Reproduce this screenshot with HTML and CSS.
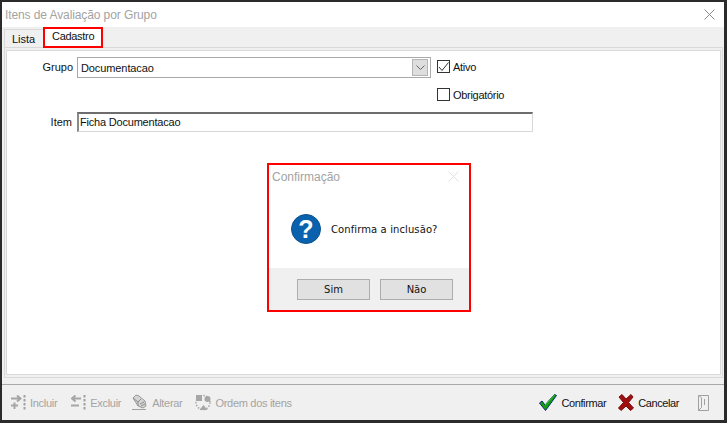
FILE: index.html
```html
<!DOCTYPE html>
<html lang="pt-BR">
<head>
  <meta charset="UTF-8" />
  <title>Itens de Avaliação por Grupo</title>
  <link rel="stylesheet" href="styles.css">
</head>
<body>
  <div class="window">
    <!-- Title Bar -->
    <header class="titlebar">
      <span class="title">Itens de Avaliação por Grupo</span>
      <svg width="11" height="11" viewBox="0 0 11 11"><path d="M0.5 0.5L10.5 10.5M10.5 0.5L0.5 10.5" stroke="#8a8a8a" fill="none"/></svg>
    </header>

    <!-- Tabs -->
    <nav class="tabs">
      <div class="tab">Lista</div>
      <div class="tab-active">Cadastro</div>
    </nav>

    <!-- Form -->
    <div class="tab-frame">
      <main class="page">
        <div class="row row-grupo">
          <label class="field-label">Grupo</label>
          <div class="combo">
            <span>Documentacao</span>
            <span class="combo-btn">
              <svg width="9" height="5" viewBox="0 0 9 5"><path d="M0.5 0.5L4.5 4.5L8.5 0.5" stroke="#666" fill="none"/></svg>
            </span>
          </div>
          <label class="check">
            <span class="box">
              <svg width="11" height="10" viewBox="0 0 11 10"><path d="M1 5L4 8.5L10.5 0.5" stroke="#333" fill="none"/></svg>
            </span>
            Ativo
          </label>
        </div>
        <div class="row row-obrig">
          <label class="check">
            <span class="box"></span>
            Obrigatório
          </label>
        </div>
        <div class="row">
          <label class="field-label field-label-item">Item</label>
          <div class="input">Ficha Documentacao</div>
        </div>
      </main>
    </div>

    <!-- Toolbar -->
    <footer class="toolbar">
      <div class="tool tool-incluir">
        <svg width="15" height="15" viewBox="0 0 15 15"><path d="M0 3.5H8M6 0.5L9.5 3.5L6 6.5M0 10.5H7M3.5 7.5V14" stroke="#a6a6a6" stroke-width="2" fill="none"/><path d="M13.5 0v2.5M13.5 4v2.5M13.5 8v2.5M13.5 12v2.5" stroke="#a0a0a0" stroke-width="2"/></svg>
        <span>Incluir</span>
      </div>
      <div class="tool tool-excluir">
        <svg width="15" height="15" viewBox="0 0 15 15"><path d="M10 3.5H2M4.5 0.5L1 3.5L4.5 6.5M0 10.5H8" stroke="#a6a6a6" stroke-width="2" fill="none"/><path d="M13.5 0v2.5M13.5 4v2.5M13.5 8v2.5M13.5 12v2.5" stroke="#a0a0a0" stroke-width="2"/></svg>
        <span>Excluir</span>
      </div>
      <div class="tool tool-alterar">
        <svg width="16" height="17" viewBox="0 0 16 17"><path d="M0 15.5H14" stroke="#a0a0a0"/><path d="M1 4L4 1L7 2L13 7L14 12L11 14L6 12Z" fill="#d4d4d4" stroke="#9a9a9a"/><path d="M1 4L6 8L6 12M6 8L9 5M8 10L12 8M9 12L13 10" stroke="#8c8c8c" fill="none"/></svg>
        <span>Alterar</span>
      </div>
      <div class="tool tool-ordem">
        <svg width="16" height="17" viewBox="0 0 16 17"><circle cx="8" cy="8.5" r="7" fill="none" stroke="#a8a8a8" stroke-width="1.5" stroke-dasharray="1.5 1.5"/><rect x="1" y="1" width="6" height="6" fill="#a6a6a6"/><circle cx="12.5" cy="5" r="3" fill="#a6a6a6"/><path d="M4.5 16L8.5 11L12.5 16Z" fill="#a6a6a6"/></svg>
        <span>Ordem dos itens</span>
      </div>
      <div class="tool tool-confirmar">
        <svg width="18" height="17" viewBox="0 0 18 17"><path d="M0.5 9L3 7L6 11L15.5 0.5L17.5 1.5L6.5 16.5Z" fill="#12a012" stroke="#0b2a70"/><path d="M6 11L15.5 1" stroke="#3fce3f"/></svg>
        <span>Confirmar</span>
      </div>
      <div class="tool tool-cancelar">
        <svg width="16" height="17" viewBox="0 0 16 17"><path d="M1 3L4 0.5L8 5L13 0.5L15 3L10.5 8.5L15.5 14L12.5 16.5L8 12L3 16.5L0.5 14L5.5 8.5Z" fill="#a00f0f" stroke="#7a0a0a"/></svg>
        <span>Cancelar</span>
      </div>
      <svg class="door" width="11" height="16" viewBox="0 0 11 16"><path d="M0.5 0.5H10.5V15.5H0.5ZM0.5 15.5L3.5 12.5V3L1 0.5M6.5 4V10" fill="none" stroke="#a0a0a0"/></svg>
    </footer>

    <!-- Confirmation Dialog -->
    <section class="dialog">
      <div class="dialog-head">
        <span>Confirmação</span>
        <svg width="11" height="11" viewBox="0 0 11 11"><path d="M0.5 0.5L10.5 10.5M10.5 0.5L0.5 10.5" stroke="#e2e2e2" fill="none"/></svg>
      </div>
      <div class="dialog-body">
        <span class="help-icon">?</span>
        <span class="dialog-msg">Confirma a inclusão?</span>
      </div>
      <div class="dialog-foot">
        <button class="btn">Sim</button>
        <button class="btn">Não</button>
      </div>
    </section>
  </div>
</body>
</html>
```

FILE: styles.css
```css
/* Base */
* {
  margin: 0;
  padding: 0;
  box-sizing: border-box;
}
body {
  font-family: "Liberation Sans", Arial, sans-serif;
  font-size: 11px;
  color: #111;
  background: #fff;
}

/* Window */
.window {
  position: relative;
  width: 727px;
  height: 423px;
  display: flex;
  flex-direction: column;
  border: solid #2b2b2b;
  border-width: 2px 3px 3px 2px;
  background: #f0f0f0;
}

/* Title Bar */
.titlebar {
  height: 25px;
  flex: none;
  background: #fff;
  display: flex;
  align-items: center;
  justify-content: space-between;
  padding: 0 9px 0 3px;
}
.title {
  font-size: 12px;
  letter-spacing: -0.1px;
  color: #a3a3a3;
}

/* Tabs */
.tabs {
  height: 20px;
  flex: none;
  display: flex;
  align-items: flex-end;
  padding-left: 2px;
}
.tab {
  width: 39px;
  height: 18px;
  padding: 2px 0 0 7px;
  line-height: 14px;
  border: 1px solid #d9d9d9;
  border-width: 1px 0 0 1px;
}
.tab-active {
  width: 60px;
  height: 21px;
  padding-left: 7px;
  line-height: 14px;
  letter-spacing: -0.3px;
  background: #fff;
  border: 2px solid #f00;
  position: relative;
  top: 1px;
}

/* Form Page */
.tab-frame {
  height: 331px;
  flex: none;
  margin: 0 1px 0 2px;
  padding: 2px 1px;
  border: 1px solid #d9d9d9;
}
.page {
  height: 100%;
  background: #fff;
  border: 1px solid #d9d9d9;
}
.row {
  display: flex;
  align-items: flex-start;
}
.row-grupo {
  padding-top: 6px;
  height: 37px;
}
.row-obrig {
  padding-left: 430px;
  height: 24px;
}
.field-label {
  width: 66px;
  text-align: right;
  line-height: 20px;
  margin-right: 4px;
}
.field-label-item {
  width: 65px;
  margin-right: 5px;
}
.combo {
  width: 354px;
  height: 21px;
  border: 1px solid #a9a9a9;
  display: flex;
  align-items: center;
  justify-content: space-between;
  padding: 0 2px 0 3px;
  letter-spacing: -0.1px;
}
.combo-btn {
  width: 16px;
  height: 17px;
  background: #dedede;
  border: 1px solid #b5b5b5;
  display: flex;
  align-items: center;
  justify-content: center;
}
.check {
  display: flex;
  align-items: center;
  gap: 3px;
  height: 13px;
  letter-spacing: -0.3px;
}
.row-grupo .check {
  margin-left: 6px;
  margin-top: 3px;
}
.box {
  width: 13px;
  height: 13px;
  border: 1px solid #333;
  background: #fff;
  display: flex;
  align-items: center;
  justify-content: center;
}
.input {
  width: 456px;
  height: 20px;
  border: 1px solid #d8d8d8;
  border-top: 2px solid #6d6d6d;
  border-left: 2px solid #8a8a8a;
  line-height: 17px;
  padding-left: 1px;
  letter-spacing: -0.2px;
}

/* Toolbar */
.toolbar {
  height: 36px;
  flex: none;
  margin-top: 6px;
  border-top: 1px solid #a9a9a9;
  display: flex;
  align-items: center;
  padding: 0 15px 0 9px;
  letter-spacing: -0.3px;
}
.tool {
  display: flex;
  align-items: center;
  gap: 4px;
  color: #a3a3a3;
}
.tool-excluir {
  margin-left: 14px;
}
.tool-alterar {
  margin-left: 11px;
}
.tool-ordem {
  margin-left: 13px;
}
.tool-confirmar {
  margin-left: auto;
  letter-spacing: -0.4px;
  color: #111;
}
.tool-cancelar {
  margin-left: 12px;
  letter-spacing: -0.4px;
  color: #111;
}
.door {
  margin-left: 19px;
}

/* Dialog */
.dialog {
  position: absolute;
  left: 265px;
  top: 161px;
  width: 204px;
  height: 149px;
  border: 2px solid #f00;
  background: #fff;
  display: flex;
  flex-direction: column;
}
.dialog-head {
  height: 22px;
  flex: none;
  display: flex;
  align-items: center;
  justify-content: space-between;
  padding: 1px 10px 0 3px;
  font-size: 12px;
  color: #a3a3a3;
}
.dialog-body {
  flex: 1;
  display: flex;
  align-items: center;
  gap: 10px;
  padding: 3px 0 0 22px;
}
.dialog-msg {
  font-family: "DejaVu Sans", sans-serif;
  font-size: 10px;
  letter-spacing: 0.1px;
}
.help-icon {
  width: 30px;
  height: 30px;
  border-radius: 50%;
  background: #0a62ae;
  border: 1px solid #0c4f8c;
  color: #fff;
  font-size: 25px;
  font-weight: bold;
  line-height: 28px;
  text-align: center;
}
.dialog-foot {
  height: 42px;
  flex: none;
  background: #f0f0f0;
  display: flex;
  gap: 10px;
  padding: 11px 0 0 28px;
}
.btn {
  width: 73px;
  height: 21px;
  background: #e1e1e1;
  border: 1px solid #adadad;
  font-family: "DejaVu Sans", sans-serif;
  font-size: 10px;
  color: #111;
}
```
